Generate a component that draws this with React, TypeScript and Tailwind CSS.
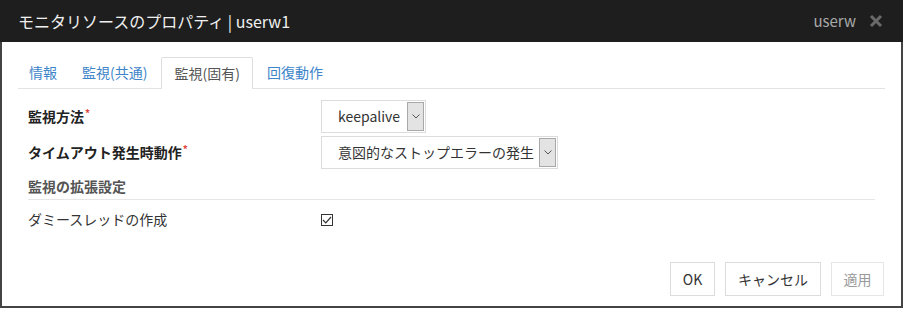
const font = { fontFamily: '"Noto Sans CJK JP", "Noto Sans", sans-serif' };

function Chevron() {
  return (
    <svg width="8" height="5" viewBox="0 0 8 5" fill="none">
      <path d="M0.5 0.5 L4 4 L7.5 0.5" stroke="#555" strokeWidth="1" />
    </svg>
  );
}

function Select({ value, width }: { value: string; width: string }) {
  return (
    <div
      className={`flex h-[33px] items-stretch border border-[#dcdcdc] bg-white ${width}`}
    >
      <span className="flex flex-1 items-center pl-[16px] text-[14px] text-[#333]">
        {value}
      </span>
      <span className="my-[1px] mr-[1px] flex w-[17px] items-center justify-center border border-[#a8a8a8] bg-[#e3e3e3]">
        <Chevron />
      </span>
    </div>
  );
}

function Required() {
  return <span className="relative -top-[5px] ml-[1px] text-[10px] text-[#e0433b]">*</span>;
}

const tabs = ["情報", "監視(共通)", "監視(固有)", "回復動作"];

export default function App() {
  return (
    <div className="h-[310px] w-[904px] bg-white" style={font}>
      <div className="flex h-[308px] w-[903px] flex-col border-x-2 border-b-2 border-[#444]">
        <div className="-mx-[2px] flex h-[42px] shrink-0 items-center bg-[#1e1e1e] pl-[18px] pr-[20px]">
          <span className="text-[16px] text-[#f0f0f0]">モニタリソースのプロパティ&nbsp;|&nbsp;userw1</span>
          <span className="ml-auto text-[15px] text-[#a9a9a9]">userw</span>
          <svg className="ml-[13px]" width="14" height="14" viewBox="0 0 14 14">
            <path d="M2 2 L12 12 M12 2 L2 12" stroke="#6a6a6a" strokeWidth="3" />
          </svg>
        </div>

        <div className="flex flex-1 flex-col px-[16px]">
          <div className="mt-[15px] flex h-[32px] border-b border-[#e3e3e3]">
            {tabs.map((t, i) =>
              i === 2 ? (
                <div
                  key={t}
                  className="-mb-[1px] mr-[3px] flex items-center rounded-t-[2px] border border-b-0 border-[#dedede] bg-white px-[12px] text-[14px] text-[#555]"
                >
                  {t}
                </div>
              ) : (
                <div
                  key={t}
                  className="mr-[3px] flex items-center px-[11px] text-[14px] text-[#3d84c9]"
                >
                  {t}
                </div>
              )
            )}
          </div>

          <div className="px-[10px]">
            <div className="mt-[11px] flex h-[33px] items-center">
              <span className="w-[293px] text-[14px] font-bold text-[#222]">
                監視方法
                <Required />
              </span>
              <Select value="keepalive" width="w-[105px]" />
            </div>
            <div className="mt-[3px] flex h-[33px] items-center">
              <span className="w-[293px] text-[14px] font-bold text-[#222]">
                タイムアウト発生時動作
                <Required />
              </span>
              <Select value="意図的なストップエラーの発生" width="w-[237px]" />
            </div>
            <div className="flex h-[31px] items-end border-b border-[#e6e6e6] pb-[2px] text-[14px] font-bold text-[#555]">
              監視の拡張設定
            </div>
            <div className="flex h-[39px] items-center">
              <span className="w-[293px] text-[14px] text-[#333]">ダミースレッドの作成</span>
              <span className="flex h-[12px] w-[12px] items-center justify-center border border-[#333] bg-white">
                <svg width="10" height="8" viewBox="0 0 10 8" fill="none">
                  <path d="M1 4 L3.8 6.8 L9 1" stroke="#333" strokeWidth="1.2" />
                </svg>
              </span>
            </div>
          </div>

          <div className="mt-auto mb-[10px] flex justify-end gap-[10px] pr-[1px]">
            <button className="h-[34px] w-[45px] border border-[#dcdcdc] bg-white text-[14px] text-[#333]">
              OK
            </button>
            <button className="h-[34px] w-[96px] border border-[#dcdcdc] bg-white text-[14px] text-[#333]">
              キャンセル
            </button>
            <button className="h-[34px] w-[53px] border border-[#e6e6e6] bg-white text-[14px] text-[#9a9a9a]">
              適用
            </button>
          </div>
        </div>
      </div>
    </div>
  );
}
